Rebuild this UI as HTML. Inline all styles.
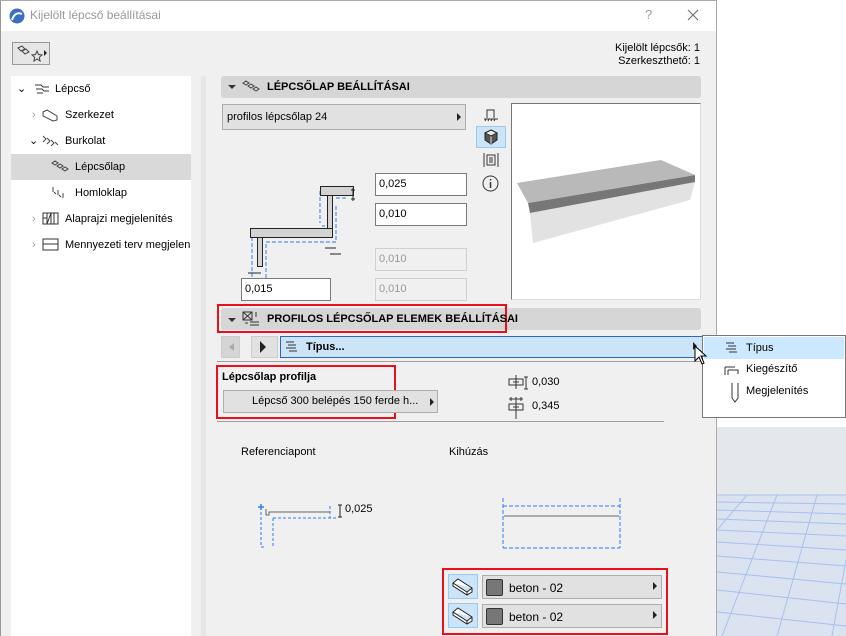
<!DOCTYPE html>
<html><head><meta charset="utf-8"><style>
*{margin:0;padding:0;box-sizing:border-box}
body{width:846px;height:636px;position:relative;overflow:hidden;background:#fff;font-family:"Liberation Sans",sans-serif;font-size:11px;color:#000}
.a{position:absolute}
.win{left:0;top:0;width:717px;height:636px;background:#f0f0f0;border-left:1px solid #999;border-right:1px solid #aaa;border-top:1px solid #aaa}
.title{left:1px;top:1px;width:715px;height:30px;background:#fff}
.tree{left:11px;top:76px;width:180px;height:560px;background:#fff}
.ti{position:absolute;height:26px;line-height:26px;font-size:11px;white-space:nowrap}
.hdr{background:#d6d6d6;border-radius:3px;font-weight:bold;font-size:11px;line-height:21px}
.inp{background:#fff;border:1px solid #7a7a7a;font-size:11px;line-height:20px;padding-left:3px}
.dis{background:#f0f0f0;border:1px solid #d0d0d0;color:#999;font-size:11px;line-height:20px;padding-left:3px}
.btn{background:#e1e1e1;border:1px solid #adadad}
.red{border:2px solid #e8101a}
.tri{width:0;height:0;border-top:4px solid transparent;border-bottom:4px solid transparent;border-left:4px solid #222}
</style></head><body>
<div class="a" style="left:717px;top:427px;width:129px;height:209px;background:#e4e8ec"></div>
<svg class="a" style="left:717px;top:490px" width="129" height="146">
<rect x="0" y="5" width="129" height="141" fill="#dbe3f1"/>
<g stroke="#a9bff0" stroke-width="1">
<line x1="0" y1="5" x2="129" y2="5"/><line x1="0" y1="12" x2="129" y2="14"/><line x1="0" y1="20" x2="129" y2="24"/><line x1="0" y1="29" x2="129" y2="34"/><line x1="0" y1="40" x2="129" y2="46"/><line x1="0" y1="52" x2="129" y2="60"/><line x1="0" y1="66" x2="129" y2="76"/><line x1="0" y1="82" x2="129" y2="94"/><line x1="0" y1="100" x2="129" y2="114"/><line x1="0" y1="122" x2="129" y2="136"/>
<line x1="5" y1="146" x2="60" y2="5"/><line x1="60" y1="146" x2="100" y2="5"/><line x1="115" y1="146" x2="129" y2="70"/><line x1="0" y1="40" x2="30" y2="5"/>
</g></svg>
<div class="a win"></div>
<div class="a title"></div>
<svg class="a" style="left:9px;top:8px" width="16" height="16"><circle cx="8" cy="8" r="7.5" fill="#3a6fc4"/><path d="M3 12 Q6 3 13 6" stroke="#fff" stroke-width="2" fill="none"/></svg>
<div class="a" style="left:30px;top:8px;color:#999;font-size:12px">Kijelölt lépcső beállításai</div>
<div class="a" style="left:645px;top:7px;color:#999;font-size:13px">?</div>
<svg class="a" style="left:687px;top:9px" width="12" height="12"><path d="M1 1L11 11M11 1L1 11" stroke="#666" stroke-width="1"/></svg>
<div class="a btn" style="left:12px;top:42px;width:38px;height:23px;background:#e6e6e6;border-color:#999"></div>
<svg class="a" style="left:15px;top:45px" width="32" height="18"><g stroke="#444" fill="none"><path d="M3 3l4-2 3 3-4 2z M7 6l4-2 3 3-4 2z"/><path d="M22 6l1.5 3.5 3.5.5-2.7 2.3.8 3.7-3.1-2-3.1 2 .8-3.7-2.7-2.3 3.5-.5z"/></g><path d="M29 5l3 3-3 3z" fill="#222"/></svg>
<div class="a" style="right:146px;top:42px;text-align:right;font-size:11px;line-height:13px">Kijelölt lépcsők: 1<br>Szerkeszthető: 1</div>
<div class="a tree">
<div class="ti" style="left:0;width:180px;background:#d9d9d9;top:78px"></div>
<div class="ti" style="left:6px;top:0">⌄</div>
<svg class="a" style="left:22px;top:6px" width="18" height="14"><g stroke="#333" fill="none"><path d="M2 3h6l2 2h6M3 7h6l2 2h5M4 11h6"/></g></svg>
<div class="ti" style="left:44px;top:0">Lépcső</div>
<div class="ti" style="left:21px;top:26px;color:#999">›</div>
<svg class="a" style="left:30px;top:32px" width="18" height="14"><g stroke="#444" fill="none"><path d="M2 4l4-2 10 6v4l-4 1L2 8z"/></g></svg>
<div class="ti" style="left:54px;top:26px">Szerkezet</div>
<div class="ti" style="left:18px;top:52px">⌄</div>
<svg class="a" style="left:30px;top:58px" width="18" height="14"><g stroke="#444" fill="none"><path d="M2 2l3 3-3 3M6 4l3 3-3 3M10 6l3 3-3 3M14 8l3 3"/></g></svg>
<div class="ti" style="left:54px;top:52px">Burkolat</div>
<svg class="a" style="left:40px;top:84px" width="18" height="14"><g stroke="#444" fill="none"><path d="M1 3l3-2 3 2-3 2zM6 6l3-2 3 2-3 2zM11 9l3-2 3 2-3 2z"/></g></svg>
<div class="ti" style="left:64px;top:78px">Lépcsőlap</div>
<svg class="a" style="left:40px;top:110px" width="18" height="14"><g stroke="#444" fill="none"><path d="M2 1v5M3 6l2 2M7 4v5M8 9l2 2M12 7v5"/></g></svg>
<div class="ti" style="left:64px;top:104px">Homloklap</div>
<div class="ti" style="left:21px;top:130px;color:#999">›</div>
<svg class="a" style="left:31px;top:136px" width="18" height="14"><g stroke="#333" fill="none"><rect x="1" y="1" width="15" height="11"/><path d="M5 1v11M9 1v11M12 1v11M1 6h4M5 12l4-11"/></g></svg>
<div class="ti" style="left:54px;top:130px">Alaprajzi megjelenítés</div>
<div class="ti" style="left:21px;top:156px;color:#999">›</div>
<svg class="a" style="left:31px;top:162px" width="18" height="14"><g stroke="#333" fill="none"><rect x="1" y="1" width="15" height="11"/><path d="M1 6h15"/></g></svg>
<div class="ti" style="left:54px;top:156px;width:126px;overflow:hidden">Mennyezeti terv megjelenítés</div>
</div>
<div class="a" style="left:201px;top:76px;width:5px;height:560px;background:#e6e6e6"></div>
<div class="a hdr" style="left:221px;top:76px;width:480px;height:22px"></div>
<div class="a" style="left:228px;top:85px;width:0;height:0;border-left:4px solid transparent;border-right:4px solid transparent;border-top:4px solid #333"></div>
<svg class="a" style="left:242px;top:80px" width="20" height="14"><g stroke="#444" fill="none"><path d="M1 3l3-2 3 2-3 2zM6 6l3-2 3 2-3 2zM11 9l3-2 3 2-3 2z"/></g></svg>
<div class="a" style="left:267px;top:81px;font-weight:bold;font-size:11px">LÉPCSŐLAP BEÁLLÍTÁSAI</div>
<div class="a btn" style="left:222px;top:104px;width:244px;height:26px"></div>
<div class="a" style="left:227px;top:111px;font-size:11px">profilos lépcsőlap 24</div>
<div class="a tri" style="left:457px;top:113px"></div>
<svg class="a" style="left:483px;top:108px" width="16" height="14"><g stroke="#333" fill="none"><path d="M4 10V2h7v8M1 11h14"/></g><path d="M2 13l1-2M5 13l1-2M8 13l1-2M11 13l1-2" stroke="#333"/></svg>
<div class="a" style="left:476px;top:126px;width:30px;height:22px;background:#cce4f7;border:1px solid #99c9ef"></div>
<svg class="a" style="left:483px;top:129px" width="16" height="16"><path d="M8 1l6 3v7l-6 4-6-4V4z" fill="#555" stroke="#222"/><path d="M2 4l6 3 6-3M8 7v8" stroke="#ddd" fill="none"/><path d="M2 4l6-3 6 3-6 3z" fill="#eee" stroke="#222"/></svg>
<svg class="a" style="left:482px;top:152px" width="18" height="16"><g stroke="#333" fill="none"><path d="M2 1v14M16 1v14M5 3h8v10H5zM7 6h4M7 8h4M7 10h4"/></g></svg>
<svg class="a" style="left:482px;top:175px" width="17" height="17"><circle cx="8.5" cy="8.5" r="7.5" stroke="#333" fill="none"/><path d="M8.5 7v6M8.5 4v1.5" stroke="#333" stroke-width="1.5"/></svg>
<div class="a" style="left:511px;top:103px;width:190px;height:197px;background:#fff;border:1px solid #999;border-color:#777 #ddd #ddd #777"></div>
<svg class="a" style="left:512px;top:104px" width="188" height="195">
<path d="M18 109L183 78 178 96 21 139z" fill="#e2e2e2"/>
<path d="M16 99L183 71 183 78 18 109z" fill="#777"/>
<path d="M5 79L149 56 183 71 16 99z" fill="#b9b9b9"/>
</svg>
<svg class="a" style="left:216px;top:160px" width="160" height="120">
<g stroke="#2d7cf6" stroke-dasharray="4 2" fill="none">
<path d="M104 31v32M109 66h-3M120 46v36H50v38M36 77v43M130 26v12h-10"/>
</g>
<rect x="104.5" y="26.5" width="33" height="9" fill="#d3d3d3" stroke="#222"/>
<rect x="111.5" y="35.5" width="5" height="33" fill="#d3d3d3" stroke="#222"/>
<rect x="34.5" y="68.5" width="82" height="9" fill="#d3d3d3" stroke="#222"/>
<rect x="41.5" y="77.5" width="5" height="29" fill="#d3d3d3" stroke="#222"/>
<g stroke="#222" fill="#222"><path d="M137 28v13M135 30h4M135 39h4"/><path d="M109 88h11M114 94h11M32 113h13"/></g>
</svg>
<div class="a inp" style="left:375px;top:173px;width:92px;height:23px">0,025</div>
<div class="a inp" style="left:375px;top:203px;width:92px;height:23px">0,010</div>
<div class="a dis" style="left:375px;top:248px;width:92px;height:23px">0,010</div>
<div class="a dis" style="left:375px;top:278px;width:92px;height:23px">0,010</div>
<div class="a inp" style="left:241px;top:278px;width:90px;height:23px">0,015</div>
<div class="a hdr" style="left:221px;top:308px;width:480px;height:22px"></div>
<div class="a red" style="left:217px;top:304px;width:290px;height:29px"></div>
<div class="a" style="left:228px;top:318px;width:0;height:0;border-left:4px solid transparent;border-right:4px solid transparent;border-top:4px solid #333"></div>
<svg class="a" style="left:242px;top:311px" width="20" height="16"><g stroke="#333" fill="none"><rect x="1" y="1" width="9" height="8"/><path d="M1 1l9 8M10 1L1 9M3 12h3M8 11h9M8 14h9M14 1v5"/></g></svg>
<div class="a" style="left:267px;top:313px;font-weight:bold;font-size:11px">PROFILOS LÉPCSŐLAP ELEMEK BEÁLLÍTÁSAI</div>
<div class="a btn" style="left:221px;top:336px;width:19px;height:22px;background:#d5d5d5;border-color:#ccc"></div>
<div class="a" style="left:229px;top:343px;width:0;height:0;border-top:4px solid transparent;border-bottom:4px solid transparent;border-right:5px solid #aaa"></div>
<div class="a btn" style="left:251px;top:336px;width:27px;height:22px;background:#e1e1e1;border-color:#ccc"></div>
<div class="a" style="left:260px;top:341px;width:0;height:0;border-top:6px solid transparent;border-bottom:6px solid transparent;border-left:6px solid #222"></div>
<div class="a" style="left:280px;top:336px;width:425px;height:22px;background:#cce4f7;border:1px solid #2a68b5"></div>
<svg class="a" style="left:284px;top:340px" width="18" height="14"><g stroke="#333" fill="none"><path d="M2 2h8M4 5h8M2 8h10M5 11h8"/></g></svg>
<div class="a" style="left:306px;top:341px;font-weight:bold;font-size:11px">Típus...</div>
<div class="a tri" style="left:693px;top:342px"></div>
<div class="a" style="left:217px;top:361px;width:488px;height:1px;background:#a0a0a0"></div>
<div class="a red" style="left:216px;top:365px;width:180px;height:54px"></div>
<div class="a" style="left:222px;top:371px;font-weight:bold;font-size:11px">Lépcsőlap profilja</div>
<div class="a btn" style="left:223px;top:390px;width:215px;height:23px"></div>
<div class="a" style="left:252px;top:395px;font-size:11px">Lépcső 300 belépés 150 ferde h...</div>
<div class="a tri" style="left:430px;top:398px"></div>
<svg class="a" style="left:508px;top:373px" width="22" height="48"><g stroke="#333" fill="none"><rect x="1" y="6" width="14" height="6"/><path d="M8 2v14M18 4v12M16 4h4M16 16h4M5 9h6"/><rect x="1" y="31" width="14" height="6"/><path d="M8 24v22M1 26h14M3 24v4M13 24v4M5 34h6"/></g></svg>
<div class="a" style="left:532px;top:376px">0,030</div>
<div class="a" style="left:532px;top:400px">0,345</div>
<div class="a" style="left:217px;top:421px;width:447px;height:1px;background:#a0a0a0"></div>
<div class="a" style="left:241px;top:446px">Referenciapont</div>
<div class="a" style="left:449px;top:446px">Kihúzás</div>
<svg class="a" style="left:258px;top:500px" width="90" height="50">
<g stroke="#2d7cf6" stroke-dasharray="3 2" fill="none"><path d="M3 7v40h5M15 18v30M15 18h65M72 6v12"/></g>
<path d="M3 4v6M0 7h6" stroke="#2d7cf6" stroke-width="1.5"/>
<path d="M8 9v6h3v-3h61" stroke="#666" fill="none"/>
<path d="M82 5v12M80 5h4M80 17h4" stroke="#222"/>
</svg>
<div class="a" style="left:345px;top:503px">0,025</div>
<svg class="a" style="left:500px;top:496px" width="130" height="60">
<g stroke="#2d7cf6" stroke-dasharray="4 2" fill="none"><path d="M3 2v50M120 2v50M3 10h117M3 52h117"/></g>
<path d="M4 20h115" stroke="#666"/>
</svg>
<div class="a red" style="left:442px;top:568px;width:226px;height:67px"></div>
<div class="a" style="left:448px;top:574px;width:30px;height:25px;background:#cce4f7;border:1px solid #99c9ef"></div>
<div class="a" style="left:448px;top:603px;width:30px;height:25px;background:#cce4f7;border:1px solid #99c9ef"></div>
<svg class="a" style="left:451px;top:577px" width="24" height="20"><path d="M2 6l5-4 14 9v4l-5 3L2 9z M2 6l14 9 5-4M16 15v3" stroke="#222" fill="#fff"/></svg>
<svg class="a" style="left:451px;top:606px" width="24" height="20"><path d="M2 6l5-4 14 9v4l-5 3L2 9z M2 6l14 9 5-4M16 15v3" stroke="#222" fill="#fff"/></svg>
<div class="a btn" style="left:482px;top:575px;width:180px;height:24px"></div>
<div class="a btn" style="left:482px;top:604px;width:180px;height:24px"></div>
<div class="a" style="left:486px;top:579px;width:17px;height:17px;background:#777;border:1px solid #333;border-radius:2px"></div>
<div class="a" style="left:486px;top:608px;width:17px;height:17px;background:#777;border:1px solid #333;border-radius:2px"></div>
<div class="a" style="left:509px;top:581px;font-size:12px">beton - 02</div>
<div class="a" style="left:509px;top:610px;font-size:12px">beton - 02</div>
<div class="a tri" style="left:653px;top:582px"></div>
<div class="a tri" style="left:653px;top:611px"></div>
<div class="a" style="left:702px;top:335px;width:144px;height:83px;background:#fff;border:1px solid #777"></div>
<div class="a" style="left:704px;top:337px;width:140px;height:22px;background:#cce8ff"></div>
<svg class="a" style="left:724px;top:341px" width="18" height="14"><g stroke="#333" fill="none"><path d="M2 2h8M4 5h8M2 8h10M5 11h8"/></g></svg>
<div class="a" style="left:746px;top:342px">Típus</div>
<svg class="a" style="left:724px;top:365px" width="18" height="14"><g stroke="#333" fill="none"><path d="M1 2h10M1 2v8M4 5h10v4M4 5v5"/></g></svg>
<div class="a" style="left:746px;top:363px">Kiegészítő</div>
<svg class="a" style="left:730px;top:382px" width="10" height="22"><path d="M2 1v15l3 4 3-4V1" stroke="#333" fill="none"/></svg>
<div class="a" style="left:746px;top:385px">Megjelenítés</div>
<svg class="a" style="left:694px;top:345px" width="14" height="22"><path d="M1 1v15l4-4 3 7 2-1-3-7h5z" fill="#fff" stroke="#000"/></svg>
</body></html>
